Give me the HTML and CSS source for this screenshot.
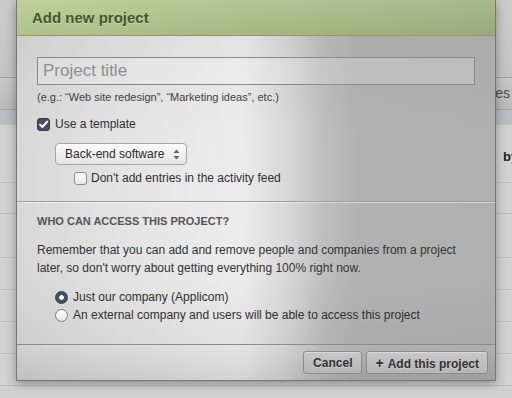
FILE: index.html
```html
<!DOCTYPE html>
<html lang="en">
<head>
    <meta charset="UTF-8">
    <meta name="viewport" content="width=device-width, initial-scale=1.0">
    <title>Add new project</title>
    <link rel="stylesheet" href="styles.css">
</head>
<body>
    <div class="page">
        <div class="topbar"></div>
        <div class="tabs"><span>Latest updates</span></div>
        <div class="subbar"></div>
        <div class="row r1"><span class="by">by</span></div>
        <div class="row r2"></div>
        <div class="row r3"></div>
        <div class="row r4"></div>
        <div class="row r4"></div>
        <div class="row r4"></div>
        <div class="row r4"></div>
    </div>

    <div class="dialog">
        <div class="dialog-head">
            <h2>Add new project</h2>
        </div>
        <div class="dialog-body">
            <section class="sec sec-first">
                <input class="title-input" placeholder="Project title">
                <p class="hint">(e.g.: “Web site redesign”, “Marketing ideas”, etc.)</p>
                <label class="opt">
                    <span class="box on">
                        <svg width="13" height="13" viewBox="0 0 13 13"><path d="M3 6.6 L5.4 9 L10.2 3.6" fill="none" stroke="#fff" stroke-width="2" stroke-linecap="round" stroke-linejoin="round"/></svg>
                    </span>
                    Use a template
                </label>
                <div class="select">
                    <span>Back-end software</span>
                    <svg width="7" height="11" viewBox="0 0 7 11"><path d="M3.5 0.5 L6.5 4 H0.5 Z M3.5 10.5 L6.5 7 H0.5 Z" fill="#666"/></svg>
                </div>
                <label class="opt opt-sub">
                    <span class="box"></span>
                    Don't add entries in the activity feed
                </label>
            </section>
            <section class="sec sec-access">
                <h3>WHO CAN ACCESS THIS PROJECT?</h3>
                <p class="note">Remember that you can add and remove people and companies from a project later, so don't worry about getting everything 100% right now.</p>
                <label class="opt opt-radio first"><span class="radio on"></span>Just our company (Applicom)</label>
                <label class="opt opt-radio"><span class="radio"></span>An external company and users will be able to access this project</label>
            </section>
            <div class="foot">
                <button type="button" class="btn">Cancel</button>
                <button type="button" class="btn"><span class="plus">+</span>Add this project</button>
            </div>
        </div>
    </div>
</body>
</html>
```

FILE: styles.css
```css
html, body {
    margin: 0;
    height: 398px;
    overflow: hidden;
}
body {
    font-family: "Liberation Sans", Arial, sans-serif;
    position: relative;
    background: #d2d2d2;
    color: #333;
}

/* page behind the dialog */
.topbar {
    height: 77px;
    background: linear-gradient(#cccccc, #c4c4c4);
    border-bottom: 1px solid #9d9d9d;
}
.tabs {
    height: 31px;
    line-height: 31px;
    background: linear-gradient(#c9c9c9, #b9b9b9);
    border-bottom: 1px solid #a3a3a3;
    text-align: right;
    padding-right: 2px;
    font-size: 14px;
    color: #4a4a4a;
}
.subbar {
    height: 15px;
    background: #b8bfc5;
}
.row {
    border-bottom: 1px solid #bdbdbd;
    background: #d3d3d3;
}
.r1 {
    height: 58px;
    box-sizing: border-box;
    padding: 22px 0 0 503px;
    white-space: nowrap;
    overflow: hidden;
}
.r2 { height: 30px; }
.r3 { height: 43px; }
.r4 { height: 31px; }
.by {
    font-weight: bold;
    font-size: 13px;
    color: #222;
}

/* dialog */
.dialog {
    position: absolute;
    left: 16px;
    top: -1px;
    width: 478px;
    border: 1px solid #777;
    box-shadow: 0 3px 10px rgba(0, 0, 0, 0.35);
}
.dialog-head {
    height: 35px;
    border-bottom: 1px solid #8a9c6a;
    background: linear-gradient(rgba(255, 255, 255, 0.12), rgba(0, 0, 0, 0.03)),
                linear-gradient(to right, #b5ca90, #9cb07e);
    padding-left: 15px;
}
.dialog-head h2 {
    margin: 0;
    font-size: 15px;
    line-height: 35px;
    color: #44572a;
    text-shadow: 0 1px 0 rgba(255, 255, 255, 0.35);
}
.dialog-body {
    background: radial-gradient(ellipse 200px 260px at 150px 150px, rgba(255, 255, 255, 0.25), rgba(255, 255, 255, 0)),
                linear-gradient(rgba(0, 0, 0, 0.03), rgba(0, 0, 0, 0) 30%, rgba(0, 0, 0, 0) 70%, rgba(0, 0, 0, 0.06)),
                linear-gradient(to right, #d5d5d5 0, #e0e0e0 140px, #e9e9e9 225px, #d4d4d4 270px, #bcbcbc 305px, #b2b2b2 340px, #b0b0b0 100%);
}
.sec {
    padding: 0 20px;
}
.sec-first {
    padding-top: 21px;
    padding-bottom: 14px;
}
.title-input {
    display: block;
    width: 100%;
    height: 28px;
    box-sizing: border-box;
    margin: 0;
    border: 1px solid #8a8a8a;
    background: rgba(255, 255, 255, 0.2);
    padding: 0 5px;
    font-family: inherit;
    font-size: 17px;
    color: #333;
    outline: none;
}
.title-input::placeholder {
    color: #8f8f8f;
}
.hint {
    margin: 5px 0 0;
    font-size: 11px;
    line-height: 14px;
    color: #3f3f3f;
}
.opt {
    display: flex;
    align-items: center;
    font-size: 12px;
    line-height: 18px;
    color: #2f2f2f;
    margin-top: 11px;
}
.box {
    width: 13px;
    height: 13px;
    box-sizing: border-box;
    border: 1px solid #8c8c8c;
    border-radius: 3px;
    background: linear-gradient(#ffffff, #e8e8e8);
    margin-right: 5px;
    display: flex;
}
.box.on {
    border-color: #333d4a;
    background: #435064;
}
.box.on svg {
    margin: -1px;
}
.opt-sub {
    margin: 4px 0 0 37px;
}
.opt-sub .box {
    margin-right: 4px;
}
.select {
    margin: 10px 0 0 18px;
    width: 132px;
    height: 22px;
    box-sizing: border-box;
    border: 1px solid #a6a6a6;
    border-radius: 4px;
    background: linear-gradient(#fbfbfb, #e4e4e4);
    padding: 0 6px 0 9px;
    display: flex;
    align-items: center;
    justify-content: space-between;
    font-size: 12px;
    color: #2a2a2a;
}
.sec-access {
    border-top: 1px solid #9e9e9e;
    box-shadow: inset 0 1px 0 rgba(255, 255, 255, 0.45);
    padding-top: 12px;
    padding-bottom: 20px;
}
.sec-access h3 {
    margin: 0;
    font-size: 11px;
    line-height: 14px;
    color: #555;
}
.note {
    margin: 13px 0 0;
    font-size: 12px;
    line-height: 18px;
    color: #333;
}
.opt-radio {
    margin: 0 0 0 18px;
}
.opt-radio.first {
    margin-top: 11px;
}
.radio {
    width: 13px;
    height: 13px;
    box-sizing: border-box;
    border: 1px solid #7d7d7d;
    border-radius: 50%;
    background: linear-gradient(#ffffff, #e4e4e4);
    margin-right: 5px;
}
.radio.on {
    border-color: #333d4a;
    background: radial-gradient(circle, #ffffff 0, #ffffff 2px, #435064 2.6px);
}
.foot {
    border-top: 1px solid #8c8c8c;
    height: 36px;
    box-sizing: border-box;
    padding: 6px 7px 0 0;
    display: flex;
    justify-content: flex-end;
    gap: 4px;
    background: linear-gradient(rgba(255, 255, 255, 0.08), rgba(0, 0, 0, 0.04));
}
.btn {
    height: 23px;
    box-sizing: border-box;
    border: 1px solid #8c8c8c;
    border-radius: 3px;
    background: linear-gradient(#c8c8c8, #b6b6b6);
    box-shadow: inset 0 1px 0 rgba(255, 255, 255, 0.35);
    padding: 0 8px;
    font-family: inherit;
    font-size: 12px;
    font-weight: bold;
    color: #333;
    text-shadow: 0 1px 0 rgba(255, 255, 255, 0.3);
}
.btn:first-child {
    padding: 0 9px;
}
.plus {
    font-size: 14px;
    margin-right: 4px;
}
```
